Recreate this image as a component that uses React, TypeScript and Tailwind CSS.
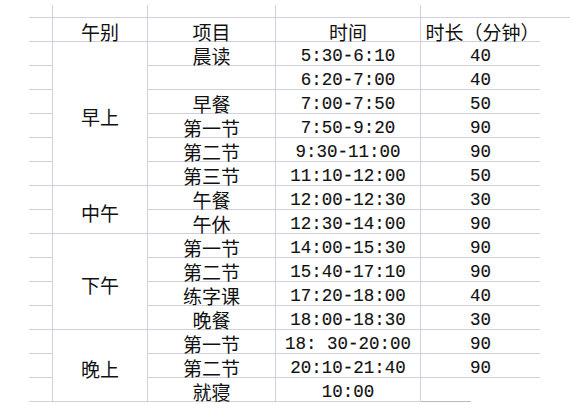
import React from 'react';

type Row = { item: string; time: string; mins: string };
type Group = { name: string; rows: Row[] };

const groups: Group[] = [
  {
    name: '早上',
    rows: [
      { item: '晨读', time: '5:30-6:10', mins: '40' },
      { item: '', time: '6:20-7:00', mins: '40' },
      { item: '早餐', time: '7:00-7:50', mins: '50' },
      { item: '第一节', time: '7:50-9:20', mins: '90' },
      { item: '第二节', time: '9:30-11:00', mins: '90' },
      { item: '第三节', time: '11:10-12:00', mins: '50' },
    ],
  },
  {
    name: '中午',
    rows: [
      { item: '午餐', time: '12:00-12:30', mins: '30' },
      { item: '午休', time: '12:30-14:00', mins: '90' },
    ],
  },
  {
    name: '下午',
    rows: [
      { item: '第一节', time: '14:00-15:30', mins: '90' },
      { item: '第二节', time: '15:40-17:10', mins: '90' },
      { item: '练字课', time: '17:20-18:00', mins: '40' },
      { item: '晚餐', time: '18:00-18:30', mins: '30' },
    ],
  },
  {
    name: '晚上',
    rows: [
      { item: '第一节', time: '18: 30-20:00', mins: '90' },
      { item: '第二节', time: '20:10-21:40', mins: '90' },
      { item: '就寝', time: '10:00', mins: '' },
    ],
  },
];

// static class names for the merged 午别 cells
const spanClass: Record<number, string> = {
  2: 'row-span-2',
  3: 'row-span-3',
  4: 'row-span-4',
  6: 'row-span-6',
};

const line = 'border-[#d0d0e0]';
const cjk = "font-['Noto_Sans_CJK_SC',sans-serif] text-[19px] leading-[19px]";
const mono = "font-['Liberation_Mono','Noto_Sans_CJK_SC',monospace] text-[17.5px] leading-[18px] [-webkit-text-stroke:0.15px_#111]";
const cell = `flex items-center justify-center pt-[4px] text-[#111] border-b ${line}`;

export default function App() {
  return (
    <div className="w-[570px] h-[404px] bg-white pt-[5px] pl-[29px] overflow-hidden">
      {/* strip above the table: only the column rules */}
      <div className="grid grid-cols-[23px_95px_128px_145px_120px] h-[12px]">
        <div />
        <div className={`border-l ${line}`} />
        <div className={`border-l ${line}`} />
        <div className={`border-l ${line}`} />
        <div className={`border-l ${line}`} />
      </div>

      <div className={`grid grid-cols-[23px_95px_128px_145px_120px] auto-rows-[24px] border-t ${line}`}>
        {/* header */}
        <div className={cell} />
        <div className={`${cell} ${cjk} border-l`}>午别</div>
        <div className={`${cell} ${cjk} border-l`}>项目</div>
        <div className={`${cell} ${cjk} border-l`}>时间</div>
        <div className={`${cell} ${cjk} border-l pl-[4px]`}>时长（分钟）</div>

        {groups.map((g, gi) =>
          g.rows.map((r, ri) => {
            const last = gi === groups.length - 1 && ri === g.rows.length - 1;
            const bottom = last ? 'border-[#b9b9c9]' : '';
            return (
              <React.Fragment key={`${gi}-${ri}`}>
                <div className={`${cell} ${bottom}`} />
                {ri === 0 && (
                  <div className={`${cell} ${cjk} ${spanClass[g.rows.length]} border-l ${gi === groups.length - 1 ? 'border-[#b9b9c9]' : ''} pt-[6px]`}>
                    {g.name}
                  </div>
                )}
                <div className={`${cell} ${cjk} border-l ${bottom}`}>{r.item}</div>
                <div className={`${cell} ${mono} border-l ${bottom}`}>{r.time}</div>
                {last ? (
                  <div className={`flex items-end border-l ${line}`}>
                    <div className="h-px w-[50px] bg-[#b9b9c9]" />
                  </div>
                ) : (
                  <div className={`${cell} ${mono} border-l`}>{r.mins}</div>
                )}
              </React.Fragment>
            );
          })
        )}
      </div>
    </div>
  );
}
